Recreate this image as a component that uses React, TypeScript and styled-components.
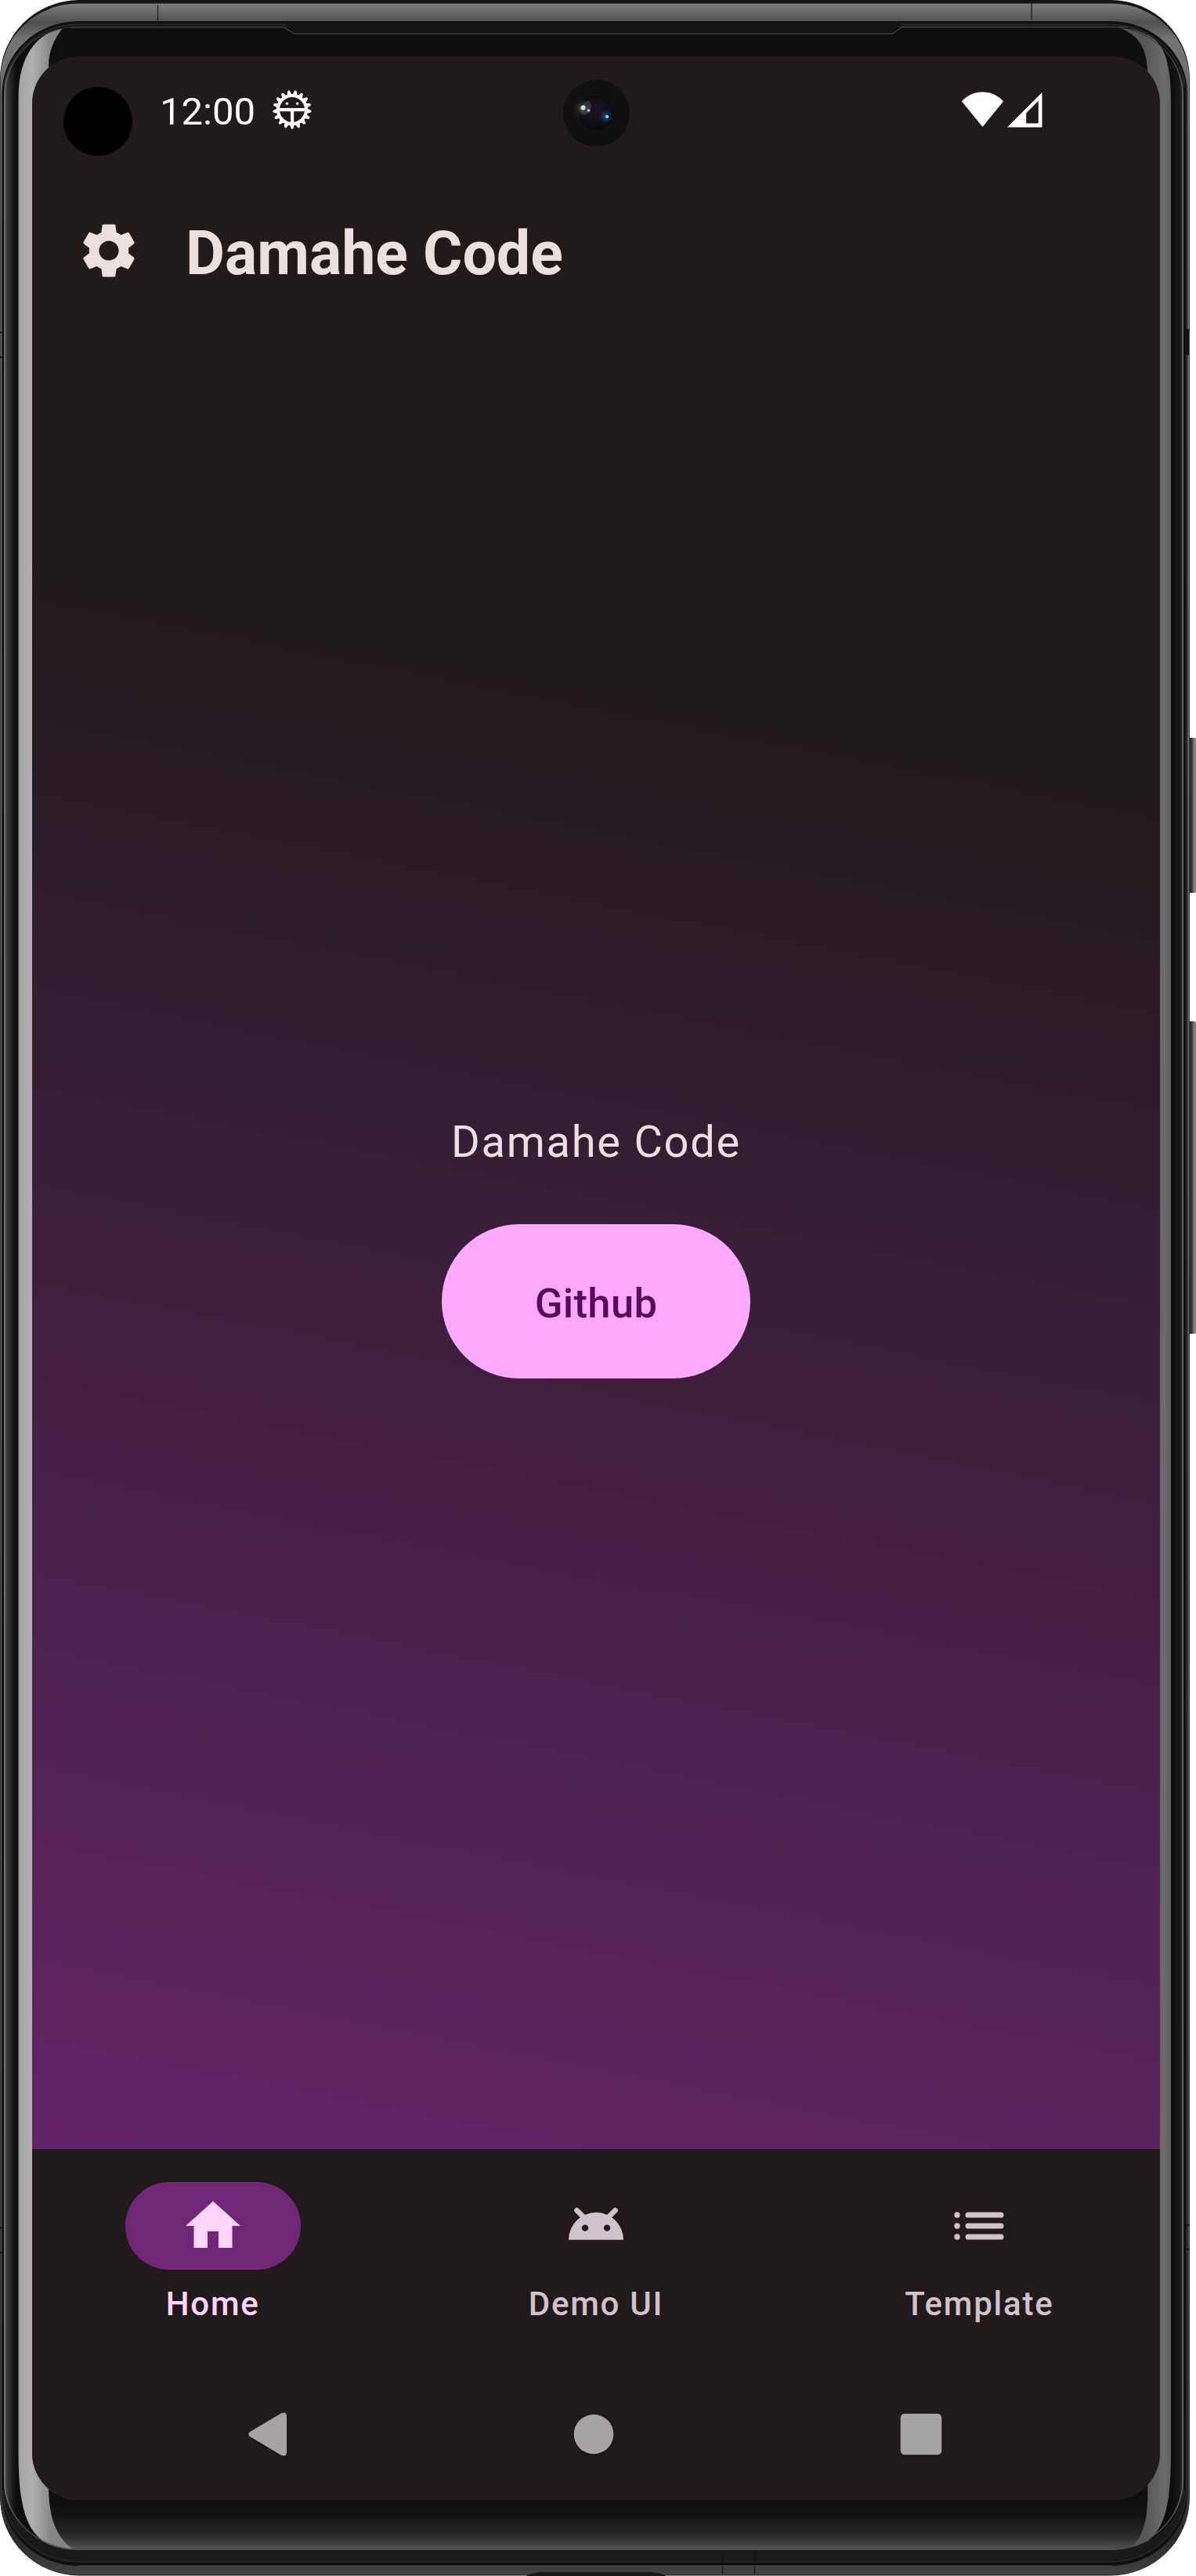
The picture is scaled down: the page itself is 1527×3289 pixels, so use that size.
import React from "react";
import styled, { createGlobalStyle } from "styled-components";
import { MdSettings } from "react-icons/md";

const color = {
  background: "#201a1b",
  onSurface: "#ecdfe0",
  onSurfaceVariant: "#d0c3cc",
  primary: "#ffa9fe",
  onPrimary: "#560a5d",
  primaryContainer: "#702776",
  onPrimaryContainer: "#ffd6fa",
  systemKey: "#a5a3a4",
};

const GlobalStyle = createGlobalStyle`
  * { box-sizing: border-box; }
  body { margin: 0; background: #fff; font-family: Roboto, "Liberation Sans", sans-serif; }
`;

const Device = styled.main`
  position: relative;
  display: flex;
  width: 1527px;
  height: 3289px;
  padding: 72px 46px 97px 41px;
  overflow: hidden;
`;

const DeviceArt = styled.svg`
  position: absolute;
  inset: 0;
  display: block;
`;

const Screen = styled.div`
  position: relative;
  display: flex;
  flex-direction: column;
  width: 1440px;
  height: 3120px;
  border-radius: 60px;
  overflow: hidden;
  background: linear-gradient(
    191.06deg,
    ${color.background} 891px,
    ${color.primaryContainer} 3259px
  );
`;

const StatusBar = styled.header`
  display: flex;
  align-items: center;
  height: 136px;
  padding: 0 150px 0 163px;
`;

const Clock = styled.span`
  width: 122px;
  padding-top: 5px;
  margin-right: 22px;
  color: #fff;
  font-size: 49px;
  line-height: 56px;
  white-space: nowrap;
`;

const Signals = styled.div`
  display: flex;
  gap: 5px;
  margin-left: auto;
`;

const PunchHole = styled.div`
  position: absolute;
  left: 40px;
  top: 39px;
  width: 88px;
  height: 88px;
  border-radius: 50%;
  background: #000;
`;

const Lens = styled.svg`
  position: absolute;
  left: 677px;
  top: 29px;
`;

const AppBar = styled.div`
  display: flex;
  align-items: center;
  gap: 56px;
  height: 224px;
  padding: 0 56px;
  color: ${color.onSurface};
`;

const Title = styled.h1`
  margin: 0;
  padding-top: 7px;
  font-size: 77px;
  font-weight: 700;
  line-height: 98px;
`;

const Content = styled.section`
  flex: 1;
  display: flex;
  flex-direction: column;
  align-items: center;
  justify-content: center;
  gap: 63px;
`;

const Message = styled.p`
  margin: 0;
  color: ${color.onSurface};
  font-size: 56px;
  line-height: 84px;
  letter-spacing: 1.75px;
`;

const Button = styled.button`
  width: 394px;
  height: 197px;
  padding: 5px 0 0;
  border: 0;
  border-radius: 99px;
  background: ${color.primary};
  color: ${color.onPrimary};
  font: 500 52.5px/70px Roboto, "Liberation Sans", sans-serif;
  letter-spacing: 0.35px;
`;

const NavBar = styled.nav`
  display: flex;
  gap: 28px;
  height: 280px;
  padding-top: 42px;
  background: ${color.background};
`;

const NavItem = styled.div<{ $active?: boolean }>`
  flex: 1;
  display: flex;
  flex-direction: column;
  align-items: center;
  gap: 16px;
  color: ${(p) => (p.$active ? color.onPrimaryContainer : color.onSurfaceVariant)};
`;

const Indicator = styled.div<{ $active?: boolean }>`
  display: flex;
  align-items: center;
  justify-content: center;
  width: 224px;
  height: 112px;
  border-radius: 56px;
  background: ${(p) => (p.$active ? color.primaryContainer : "transparent")};
`;

const NavLabel = styled.span`
  font-size: 42px;
  font-weight: 500;
  line-height: 56px;
  letter-spacing: 1.75px;
`;

const SystemBar = styled.footer`
  display: flex;
  align-items: center;
  justify-content: space-between;
  height: 168px;
  padding: 0 278px 0 275px;
  background: ${color.background};
  color: ${color.systemKey};
`;

const SystemKey = styled.svg`
  display: block;
  fill: currentColor;
  filter: drop-shadow(0 2px 1px rgba(0, 0, 0, 0.3));
`;

const toothAngles = Array.from({ length: 17 }, (_, i) => 180 + (i * 360) / 17);

const DebugIcon = () => (
  <svg width="50" height="50" viewBox="-25 -25 50 50" fill="#fff">
    {toothAngles.map((a) => (
      <path key={a} d="M-3.9-18.5Q-2.2-20-1.9-22.6Q-1.6-24.8 0-24.8Q1.6-24.8 1.9-22.6Q2.2-20 3.9-18.5z" transform={`rotate(${a})`} />
    ))}
    <circle r="18" fill="none" stroke="#fff" strokeWidth="4" />
    <rect x="-17" y="-2" width="34" height="4.2" />
    <rect x="-2" y="1" width="4.2" height="17" />
    <circle cx="-6.6" cy="-7.8" r="1.7" />
    <circle cx="6.7" cy="-7.8" r="1.7" />
  </svg>
);

const WifiIcon = () => (
  <svg width="53" height="46" viewBox="0 0 53 46" fill="#fff">
    <path d="M0 12.4C7 4.6 16 .6 26.5.6S46 4.6 53 12.4L26.5 45z" />
  </svg>
);

const CellIcon = () => (
  <svg width="45" height="46" viewBox="0 0 45 46" fill="#fff" fillRule="evenodd">
    <path d="M0 45.5L44.5 1v44.5zM24.2 27.4v13h15.6V11.8z" />
  </svg>
);

const HomeIcon = () => (
  <svg width="84" height="84" viewBox="0 0 24 24" fill="currentColor">
    <path d="M10 20v-6h4v6h5v-8h3L12 3 2 12h3v8z" />
  </svg>
);

const AndroidIcon = () => (
  <svg width="84" height="84" viewBox="0 0 24 24">
    <path d="M5 6.35l3 3M19 6.35l-3 3" stroke="currentColor" strokeWidth="1.9" strokeLinecap="round" />
    <path
      fill="currentColor"
      fillRule="evenodd"
      d="M2 17.1a10 10 0 0 1 20 0zM8 11.55a1.2 1.2 0 1 0 0 2.4 1.2 1.2 0 1 0 0-2.4zM16 11.55a1.2 1.2 0 1 0 0 2.4 1.2 1.2 0 1 0 0-2.4z"
    />
  </svg>
);

const ListIcon = () => (
  <svg width="84" height="84" viewBox="0 0 24 24" fill="currentColor">
    {[8, 12, 16].map((y) => (
      <g key={y}>
        <circle cx="4" cy={y} r="1.05" />
        <rect x="7" y={y - 1.03} width="14" height="2.06" rx="1.03" />
      </g>
    ))}
  </svg>
);

const navItems = [
  { label: "Home", icon: <HomeIcon />, active: true },
  { label: "Demo UI", icon: <AndroidIcon />, active: false },
  { label: "Template", icon: <ListIcon />, active: false },
];

const CameraLens = () => (
  <Lens width="87" height="87" viewBox="-43.5 -43.5 87 87">
    <defs>
      <radialGradient id="lens" cx="50%" cy="40%" r="60%">
        <stop offset="0" stopColor="#1c1320" />
        <stop offset=".6" stopColor="#120e18" />
        <stop offset="1" stopColor="#07090c" />
      </radialGradient>
      <radialGradient id="glow">
        <stop offset="0" stopColor="#8e9880" stopOpacity=".7" />
        <stop offset=".5" stopColor="#4a5544" stopOpacity=".25" />
        <stop offset="1" stopColor="#222" stopOpacity="0" />
      </radialGradient>
      <radialGradient id="blue">
        <stop offset="0" stopColor="#1a6fb4" stopOpacity=".95" />
        <stop offset=".5" stopColor="#123e68" stopOpacity=".5" />
        <stop offset="1" stopColor="#0b2036" stopOpacity="0" />
      </radialGradient>
    </defs>
    <circle r="42.7" fill="#0f1110" />
    <circle r="21" fill="url(#lens)" stroke="#090a0b" strokeWidth="1" />
    <circle cx="-18" cy="-6" r="14" fill="url(#glow)" />
    <path d="M-19-8Q-16-15-10-16L-6-10L-11 1L-19 2z" fill="#31516d" opacity=".55" />
    <circle cx="12" cy="4" r="10" fill="url(#blue)" />
    <circle cx="-17" cy="-7" r="3" fill="#d8dccb" />
    <circle cx="-10" cy="-3.5" r="2.2" fill="#9c7394" />
    <circle cx="-10" cy="-3.5" r="1" fill="#f5dcee" />
    <circle cx="13.6" cy="4.5" r="1.9" fill="#a9d8f7" />
  </Lens>
);

const Bezel = () => (
  <DeviceArt width="1527" height="3289" viewBox="0 0 1527 3289">
    <defs>
      <linearGradient id="metal" gradientUnits="userSpaceOnUse" x1="0" y1="5" x2="0" y2="3289">
        <stop offset="0" stopColor="#7c7c7c" />
        <stop offset=".0072" stopColor="#4f4f4f" />
        <stop offset=".014" stopColor="#747474" />
        <stop offset=".04" stopColor="#6a6a6a" />
        <stop offset=".86" stopColor="#4a4a4a" />
        <stop offset=".97" stopColor="#3a3a3a" />
        <stop offset=".985" stopColor="#282828" />
        <stop offset="1" stopColor="#434343" />
      </linearGradient>
      <linearGradient id="glass" gradientUnits="userSpaceOnUse" x1="5" y1="0" x2="1514" y2="0">
        <stop offset="0" stopColor="#555" />
        <stop offset=".003" stopColor="#363636" />
        <stop offset=".009" stopColor="#121212" />
        <stop offset=".012" stopColor="#0d0d0d" />
        <stop offset=".988" stopColor="#0d0d0d" />
        <stop offset=".994" stopColor="#161616" />
        <stop offset="1" stopColor="#2c2c2c" />
      </linearGradient>
      <linearGradient id="chin" x1="0" y1="0" x2="0" y2="1">
        <stop offset="0" stopColor="#0e0e0e" />
        <stop offset=".4" stopColor="#131313" />
        <stop offset=".75" stopColor="#2a2a2a" />
        <stop offset="1" stopColor="#565656" />
      </linearGradient>
      <linearGradient id="shineL" gradientUnits="userSpaceOnUse" x1="23" y1="0" x2="66" y2="0">
        <stop offset="0" stopColor="#909090" />
        <stop offset=".07" stopColor="#a6a6a6" />
        <stop offset=".4" stopColor="#b0b0b0" />
        <stop offset="1" stopColor="#868686" />
      </linearGradient>
      <linearGradient id="shineR" gradientUnits="userSpaceOnUse" x1="1460" y1="0" x2="1495" y2="0">
        <stop offset="0" stopColor="#565656" />
        <stop offset=".75" stopColor="#6b6b6b" />
        <stop offset="1" stopColor="#626262" />
      </linearGradient>
      <linearGradient id="fadeEnds" x1="0" y1="0" x2="0" y2="1">
        <stop offset="0" stopColor="#2b2b2b" />
        <stop offset=".03" stopColor="#858585" />
        <stop offset=".97" stopColor="#8a8a8a" />
        <stop offset="1" stopColor="#4c4c4c" />
      </linearGradient>
      <linearGradient id="key" x1="0" y1="0" x2="1" y2="0">
        <stop offset="0" stopColor="#191919" />
        <stop offset=".45" stopColor="#343434" />
        <stop offset=".75" stopColor="#8a8a8a" />
        <stop offset="1" stopColor="#686868" />
      </linearGradient>
      <clipPath id="glassClip">
        <rect x="5" y="33" width="1508" height="3223" rx="95" ry="88" />
      </clipPath>
    </defs>

    {/* power and volume keys */}
    <rect x="1516" y="942" width="12" height="198" rx="4" fill="url(#key)" />
    <rect x="1516" y="1304" width="12" height="399" rx="4" fill="url(#key)" />

    {/* outer rim, metal band and the dark channel inside it */}
    <rect x="0" y="0" width="1519" height="3288.5" rx="101" fill="#151515" />
    <rect x=".5" y="4.5" width="1518" height="3283" rx="99" ry="97" fill="url(#metal)" />
    <rect x="2.5" y="27" width="1513.5" height="3249" rx="98" ry="92" fill="#101010" />
    <rect x="3.5" y="31" width="1511" height="3240" rx="97" ry="92" fill="#191919" stroke="#333" strokeWidth="1" />
    <rect x="5" y="33" width="1508" height="3223" rx="95" ry="88" fill="url(#glass)" />

    <g clipPath="url(#glassClip)">
      <rect x="62" y="33" width="1402" height="60" fill="#0f0f0f" />
      <rect x="30" y="3185" width="1460" height="71" fill="url(#chin)" />
      <path d="M5 3120H23V3180Q30 3235 70 3256H5z" fill="url(#glass)" />
      <path d="M1513 3120H1495V3180Q1488 3235 1450 3256H1513z" fill="url(#glass)" />
      <path
        d="M80 36C48 42 23.5 70 23.5 125V3130C23.5 3205 34 3254 93 3255C74 3240 62 3220 62 3172V84C62 65 70 48 80 36z"
        fill="url(#shineL)"
      />
      <path
        d="M1430 36C1453 44 1465 62 1465 92V3168C1467 3215 1460 3238 1445 3252C1484 3244 1495 3210 1495 3130V130C1495 75 1485 50 1456 38z"
        fill="url(#shineR)"
      />
    </g>
    <rect x="6" y="34" width="1504" height="3221" rx="94" ry="87" fill="none" stroke="url(#fadeEnds)" strokeWidth="1.6" opacity=".75" />
    <path d="M4 110V3180M1512.5 110V3180" stroke="#0b0b0b" strokeWidth="2" />

    {/* speaker step along the top edge */}
    <path d="M90 35H363L376 43H1139L1152 34.5H1440" fill="none" stroke="#3d3d3d" strokeWidth="1.4" />
    <path d="M364 29.5H1151L1138 41.5H377z" fill="#141414" />

    {/* antenna seams */}
    <path d="M201.5 6V29M1317 4V25" stroke="#202020" strokeWidth="1.3" />
    <path d="M0 424.5H4M0 456H4M0 2844.5H4M0 2876H4M1513 421H1519M1513 452H1519M1513 2841H1519M1513 2872H1519" stroke="#0d0d0d" strokeWidth="1.5" />
    <path d="M1516 421V452" stroke="#151515" strokeWidth="4" />
    <path d="M922.5 3257V3287M963.5 3257V3287" stroke="#141414" strokeWidth="1.2" />

    {/* bottom rim lines and charging port */}
    <path d="M100 3274H1420" stroke="#0c0c0c" strokeWidth="3" />
    <path d="M100 3276H1420" stroke="#525252" strokeWidth="1" />
    <path d="M672 3289Q680 3284 694 3284H828Q842 3284 850 3289z" fill="#181818" />
  </DeviceArt>
);

export default function App() {
  return (
    <Device>
      <GlobalStyle />
      <Bezel />
      <Screen>
        <PunchHole />
        <CameraLens />
        <StatusBar>
          <Clock>12:00</Clock>
          <DebugIcon />
          <Signals>
            <WifiIcon />
            <CellIcon />
          </Signals>
        </StatusBar>
        <AppBar>
          <MdSettings size={84} />
          <Title>Damahe Code</Title>
        </AppBar>
        <Content>
          <Message>Damahe Code</Message>
          <Button>Github</Button>
        </Content>
        <NavBar>
          {navItems.map((item) => (
            <NavItem key={item.label} $active={item.active}>
              <Indicator $active={item.active}>{item.icon}</Indicator>
              <NavLabel>{item.label}</NavLabel>
            </NavItem>
          ))}
        </NavBar>
        <SystemBar>
          <SystemKey width="51" height="58" viewBox="0 0 51 58">
            <path d="M3 26L43 2.2Q50 -.5 50 6V52Q50 58.500 43 55.800L3 32Q-.5 29 3 26z" />
          </SystemKey>
          <SystemKey width="52" height="52" viewBox="0 0 52 52">
            <circle cx="26" cy="26" r="25.300" />
          </SystemKey>
          <SystemKey width="54" height="54" viewBox="0 0 54 54">
            <rect x=".7" y=".7" width="52.600" height="52.600" rx="5.500" />
          </SystemKey>
        </SystemBar>
      </Screen>
    </Device>
  );
}
